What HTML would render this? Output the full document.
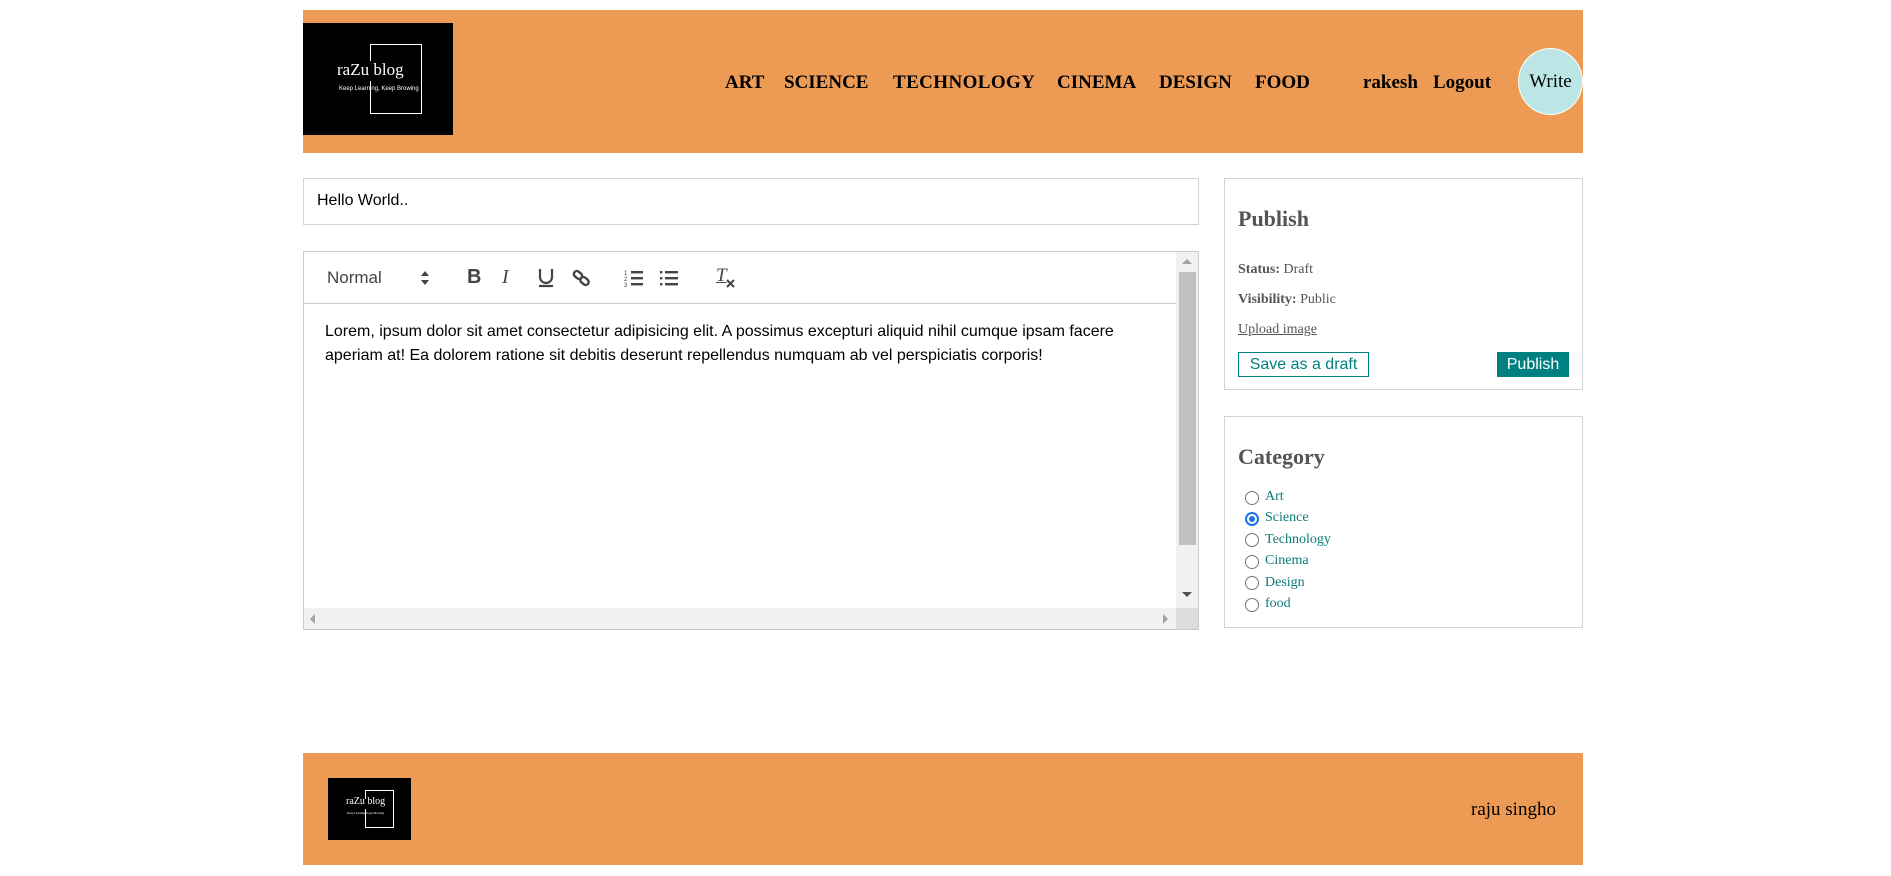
<!DOCTYPE html>
<html><head><style>
*{box-sizing:border-box;margin:0;padding:0}
body{width:1891px;height:876px;background:#fff;position:relative;font-family:"Liberation Serif",serif;overflow:hidden}
.a{position:absolute}
.hdr{left:303px;top:10px;width:1280px;height:143px;background:#ed9a55}
.logo{background:#000;color:#fff}
.nav{top:72px;font-weight:bold;font-size:19px;color:#000;white-space:nowrap}
.box{border:1px solid #d3d3d3;background:#fff}
.rad{width:14px;height:14px;border:1px solid #767676;border-radius:50%;background:#fff}
.lbl{font-size:14px;color:#0a7a7a}
</style></head><body>
<div class="a hdr"></div>
<div class="a logo" style="left:303px;top:23px;width:150px;height:112px">
  <div class="a" style="left:67px;top:21px;width:52px;height:70px;border:1px solid #fff;border-left-width:1px"></div>
  <div class="a" style="left:26px;top:38px;width:70px;height:20px;background:#000"></div>
  <div class="a" style="left:34px;top:37px;font-size:17px;color:#fff;white-space:nowrap">raZu blog</div>
  <div class="a" style="left:36px;top:63px;font-size:6px;color:#fff;font-family:'Liberation Sans',sans-serif;white-space:nowrap">Keep Learning, Keep Browing</div>
</div>
<div class="a nav" style="left:725px">ART</div>
<div class="a nav" style="left:784px">SCIENCE</div>
<div class="a nav" style="left:893px;letter-spacing:0.4px">TECHNOLOGY</div>
<div class="a nav" style="left:1057px">CINEMA</div>
<div class="a nav" style="left:1159px">DESIGN</div>
<div class="a nav" style="left:1255px">FOOD</div>
<div class="a nav" style="left:1363px">rakesh</div>
<div class="a nav" style="left:1433px">Logout</div>
<div class="a" style="left:1518px;top:48px;width:65px;height:67px;border-radius:50%;background:#bce6e6;border:1px solid #fff;font-size:19px;line-height:65px;text-align:center">Write</div>

<div class="a box" style="left:303px;top:178px;width:896px;height:47px;padding:13px 13px;font:16px 'Liberation Sans',sans-serif;color:#000">Hello World..</div>

<div class="a box" style="left:303px;top:251px;width:896px;height:379px;border-color:#ccc"></div>
<div class="a" style="left:304px;top:303px;width:872px;height:1px;background:#ccc"></div>
<div class="a" style="left:327px;top:268px;font:17px 'Liberation Sans',sans-serif;color:#444">Normal</div>
<svg class="a" style="left:420px;top:270px" width="10" height="16"><path d="M1 6L5 1 9 6ZM1 10L5 15 9 10Z" fill="#444"/></svg>
<div class="a" style="left:467px;top:266px;font:bold 20px 'Liberation Sans',sans-serif;color:#444">B</div>
<div class="a" style="left:502px;top:266px;font:italic 20px 'Liberation Serif',serif;color:#444">I</div>
<svg class="a" style="left:537px;top:268px" width="18" height="20"><path d="M3 1V9a6 6 0 0 0 12 0V1M2 18H16" stroke="#444" stroke-width="2.2" fill="none"/></svg>
<svg class="a" style="left:572px;top:268px" width="20" height="20"><g stroke="#444" stroke-width="2.4" fill="none"><rect x="1.5" y="4" width="9" height="6" rx="3" transform="rotate(40 6 7)"/><rect x="8" y="10" width="9" height="6" rx="3" transform="rotate(40 12.5 13)"/></g></svg>
<svg class="a" style="left:624px;top:269px" width="20" height="18"><g fill="#444"><rect x="7" y="2" width="12" height="2.4"/><rect x="7" y="8" width="12" height="2.4"/><rect x="7" y="14" width="12" height="2.4"/></g><text x="0" y="6" font-size="6" font-family="Liberation Sans" fill="#444">1</text><text x="0" y="12" font-size="6" font-family="Liberation Sans" fill="#444">2</text><text x="0" y="18" font-size="6" font-family="Liberation Sans" fill="#444">3</text></svg>
<svg class="a" style="left:659px;top:269px" width="20" height="18"><g fill="#444"><rect x="6" y="2" width="13" height="2.4"/><rect x="6" y="8" width="13" height="2.4"/><rect x="6" y="14" width="13" height="2.4"/><rect x="1" y="2" width="2.4" height="2.4"/><rect x="1" y="8" width="2.4" height="2.4"/><rect x="1" y="14" width="2.4" height="2.4"/></g></svg>
<div class="a" style="left:716px;top:265px;font:italic 19px 'Liberation Serif',serif;color:#444;text-decoration:underline">T</div>
<svg class="a" style="left:726px;top:279px" width="9" height="9"><path d="M1 1L8 8M8 1L1 8" stroke="#444" stroke-width="2"/></svg>
<div class="a" style="left:325px;top:320px;width:840px;font:16px/24px 'Liberation Sans',sans-serif;color:#000">Lorem, ipsum dolor sit amet consectetur adipisicing elit. A possimus excepturi aliquid nihil cumque ipsam facere aperiam at! Ea dolorem ratione sit debitis deserunt repellendus numquam ab vel perspiciatis corporis!</div>
<div class="a" style="left:1176px;top:252px;width:22px;height:356px;background:#f1f1f1"></div>
<div class="a" style="left:1179px;top:272px;width:17px;height:273px;background:#c1c1c1"></div>
<svg class="a" style="left:1182px;top:259px" width="10" height="6"><path d="M0 5L5 0 10 5Z" fill="#a3a3a3"/></svg>
<svg class="a" style="left:1182px;top:592px" width="10" height="6"><path d="M0 0L5 5 10 0Z" fill="#505050"/></svg>
<div class="a" style="left:304px;top:608px;width:872px;height:21px;background:#f1f1f1"></div>
<div class="a" style="left:1176px;top:608px;width:22px;height:21px;background:#dcdcdc"></div>
<svg class="a" style="left:310px;top:614px" width="6" height="10"><path d="M5 0L0 5 5 10Z" fill="#a3a3a3"/></svg>
<svg class="a" style="left:1163px;top:614px" width="6" height="10"><path d="M0 0L5 5 0 10Z" fill="#a3a3a3"/></svg>

<div class="a box" style="left:1224px;top:178px;width:359px;height:212px"></div>
<div class="a" style="left:1238px;top:206px;font-weight:bold;font-size:22px;color:#555">Publish</div>
<div class="a" style="left:1238px;top:262px;font-size:14px;color:#555"><b>Status:</b> Draft</div>
<div class="a" style="left:1238px;top:292px;font-size:14px;color:#555"><b>Visibility:</b> Public</div>
<div class="a" style="left:1238px;top:322px;font-size:14px;color:#555;text-decoration:underline">Upload image</div>
<div class="a" style="left:1238px;top:352px;width:131px;height:25px;border:1px solid #008080;color:#008080;font:16px/23px 'Liberation Sans',sans-serif;text-align:center">Save as a draft</div>
<div class="a" style="left:1497px;top:352px;width:72px;height:25px;background:#008080;color:#fff;font:16px/25px 'Liberation Sans',sans-serif;text-align:center">Publish</div>

<div class="a box" style="left:1224px;top:416px;width:359px;height:212px"></div>
<div class="a" style="left:1238px;top:444px;font-weight:bold;font-size:22px;color:#555">Category</div>
<div class="a rad" style="left:1245px;top:491px"></div><div class="a lbl" style="left:1265px;top:489px">Art</div>
<div class="a rad" style="left:1245px;top:512px;border:2px solid #1a73e8"><div style="margin:2px;width:6px;height:6px;border-radius:50%;background:#1a73e8"></div></div><div class="a lbl" style="left:1265px;top:510px">Science</div>
<div class="a rad" style="left:1245px;top:533px"></div><div class="a lbl" style="left:1265px;top:532px">Technology</div>
<div class="a rad" style="left:1245px;top:555px"></div><div class="a lbl" style="left:1265px;top:553px">Cinema</div>
<div class="a rad" style="left:1245px;top:576px"></div><div class="a lbl" style="left:1265px;top:575px">Design</div>
<div class="a rad" style="left:1245px;top:598px"></div><div class="a lbl" style="left:1265px;top:596px">food</div>

<div class="a" style="left:303px;top:753px;width:1280px;height:112px;background:#ed9a55"></div>
<div class="a logo" style="left:328px;top:778px;width:83px;height:62px">
  <div class="a" style="left:37px;top:12px;width:29px;height:38px;border:1px solid #fff"></div>
  <div class="a" style="left:14px;top:21px;width:40px;height:10px;background:#000"></div>
  <div class="a" style="left:18px;top:18px;font-size:10px;color:#fff;white-space:nowrap">raZu blog</div>
  <div class="a" style="left:19px;top:33px;font-size:3px;color:#fff;white-space:nowrap">Keep Learning, Keep Browing</div>
</div>
<div class="a" style="left:1471px;top:799px;font-size:19px;color:#000">raju singho</div>
</body></html>
